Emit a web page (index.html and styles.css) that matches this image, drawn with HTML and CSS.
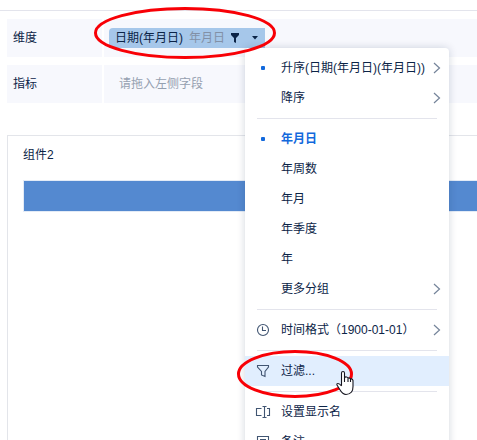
FILE: index.html
```
<!DOCTYPE html>
<html lang="zh-CN">
<head>
<meta charset="utf-8">
<title>组件2</title>
<link rel="stylesheet" href="styles.css">
</head>
<body>
<main class="page">
  <div class="topline"></div>
  <section class="shelves">
    <div class="shelf">
      <div class="shelf-label">维度</div>
      <div class="shelf-body">
        <div class="chip">
          <span>日期(年月日)</span>
          <span class="chip-group">年月日</span>
          <svg class="chip-filter" width="8" height="10" viewBox="0 0 8 10"><path d="M0 0h8v2L5 5v5L3 9V5L0 2z"/></svg>
          <svg class="chip-caret" width="6" height="4" viewBox="0 0 6 4"><path d="M0 0h6L3 3.6z"/></svg>
        </div>
      </div>
    </div>
    <div class="shelf">
      <div class="shelf-label">指标</div>
      <div class="shelf-body"><span class="placeholder">请拖入左侧字段</span></div>
    </div>
  </section>
  <section class="card">
    <div class="card-title">组件2</div>
    <div class="bar"></div>
  </section>

  <div class="menu">
    <div class="item"><i class="dot"></i><span>升序(日期(年月日)(年月日))</span><svg class="chevron" viewBox="0 0 8 12"><path d="M1 1l5.5 5L1 11"/></svg></div>
    <div class="item"><span>降序</span><svg class="chevron" viewBox="0 0 8 12"><path d="M1 1l5.5 5L1 11"/></svg></div>
    <div class="sep"></div>
    <div class="item selected"><i class="dot"></i><span>年月日</span></div>
    <div class="item"><span>年周数</span></div>
    <div class="item"><span>年月</span></div>
    <div class="item"><span>年季度</span></div>
    <div class="item"><span>年</span></div>
    <div class="item"><span>更多分组</span><svg class="chevron" viewBox="0 0 8 12"><path d="M1 1l5.5 5L1 11"/></svg></div>
    <div class="sep"></div>
    <div class="item"><svg class="icon" viewBox="0 0 16 16"><circle cx="8" cy="8" r="5.5"/><path d="M7.5 4.5v4H11"/></svg><span>时间格式（1900-01-01）</span><svg class="chevron" viewBox="0 0 8 12"><path d="M1 1l5.5 5L1 11"/></svg></div>
    <div class="sep"></div>
    <div class="item hover"><svg class="icon" viewBox="0 0 16 16"><path d="M2.5 2.5h11v1.5L10 8.5v5L6.500 12V8.500L2.500 4z"/></svg><span>过滤...</span></div>
    <div class="sep"></div>
    <div class="item"><svg class="icon" viewBox="0 0 16 16"><path d="M6.500 4.500h-5v7h5M12 4.500h2.500v7H12M7.500 2.500h4M9.500 2.500v11M7.500 13.500h4"/></svg><span>设置显示名</span></div>
    <div class="item"><svg class="icon" viewBox="0 0 16 16"><path d="M2.500 2.500h11v11h-11zM5 5.500h6M5 8.500h6"/></svg><span>备注</span></div>
  </div>

  <svg class="marks" width="477" height="440" viewBox="0 0 477 440">
    <ellipse cx="185" cy="33" rx="89.500" ry="24.500"/>
    <ellipse cx="295" cy="374" rx="56.500" ry="22.500"/>
    <path class="hand" d="M341.500 385.500V373q0-1.500 1.500-1.500t1.500 1.500v5q.5-1.500 2-1t1.500 1q2-.5 2.500 1 2-.5 2.500 1.500v6q0 4-1.500 5.500-2 2.500-5.500 2.500c-4 0-5-3-6.500-5.500l-2.500-4q-.5-1.500 1-1.500t3.500 2.500M344.500 378v4M348 378v4M350.500 379v3"/>
  </svg>
</main>
</body>
</html>
```
FILE: styles.css
```
* { box-sizing: border-box; }
body {
  margin: 0;
  background: #fff;
  color: #0c2447;
  font: 12px/20px "Liberation Sans", "Noto Sans CJK SC", sans-serif;
}
.page {
  position: relative;
  width: 477px;
  height: 440px;
  overflow: hidden;
  padding-top: 10px;
}
.topline { height: 1px; background: #e3e4ec; }
.shelves {
  display: flex;
  flex-direction: column;
  gap: 8px;
  padding: 8px 0 0 7px;
}
.shelf { display: flex; gap: 2px; height: 38px; }
.shelf-label {
  width: 95px;
  padding: 9px 6px;
  background: #f7f8fd;
}
.shelf-body { flex: 1; padding: 9px 5px; background: #f7f8fd; }
.placeholder { margin-left: 10px; color: #95a0b0; }
.chip {
  display: flex;
  align-items: center;
  width: 156px;
  height: 20px;
  padding-left: 6px;
  border-radius: 4px 0 0 0;
  background: #a6c7ea;
}
.chip-group { margin-left: 6px; color: #8290a6; }
.chip-filter { margin-left: 6px; fill: #0c2447; }
.chip-caret { margin-left: 13px; fill: #0c2447; }
.card {
  margin: 32px 0 0 7px;
  height: 320px;
  padding: 9px 0 0 15px;
  border: solid #e3e5ea;
  border-width: 1px 0 0 1px;
}
.bar {
  height: 32px;
  margin-top: 15px;
  border: 1px solid #e3ebf6;
  border-right: 0;
  background: #5489d0;
}
.menu {
  position: absolute;
  left: 245px;
  top: 48px;
  width: 204px;
  height: 420px;
  padding: 5px 0;
  border-radius: 4px;
  background: #fff;
  box-shadow: 0 0 8px rgba(12, 36, 71, .18);
}
.item {
  display: grid;
  grid-template-columns: 16px 1fr 8px;
  column-gap: 10px;
  align-items: center;
  height: 30px;
  padding: 0 8px 0 10px;
  white-space: nowrap;
}
.item span { grid-column: 2; grid-row: 1; width: 0; }
.dot {
  width: 4px;
  height: 4px;
  margin-left: 6px;
  border-radius: 1px;
  background: #1269dc;
}
.chevron {
  grid-column: 3;
  grid-row: 1;
  width: 8px;
  height: 12px;
  fill: none;
  stroke: #75849a;
  stroke-width: 1.2;
}
.icon {
  width: 16px;
  height: 16px;
  fill: none;
  stroke: #415572;
  stroke-width: 1.1;
}
.selected { color: #1269dc; font-weight: 700; }
.hover { background: #e1eefe; }
.sep { height: 1px; margin: 5px 12px; background: #e3e4ec; }
.marks { position: absolute; left: 0; top: 0; }
.marks ellipse { fill: none; stroke: #f80006; stroke-width: 3; }
.hand { fill: #fff; stroke: #14141e; stroke-width: 1.1; }
```
